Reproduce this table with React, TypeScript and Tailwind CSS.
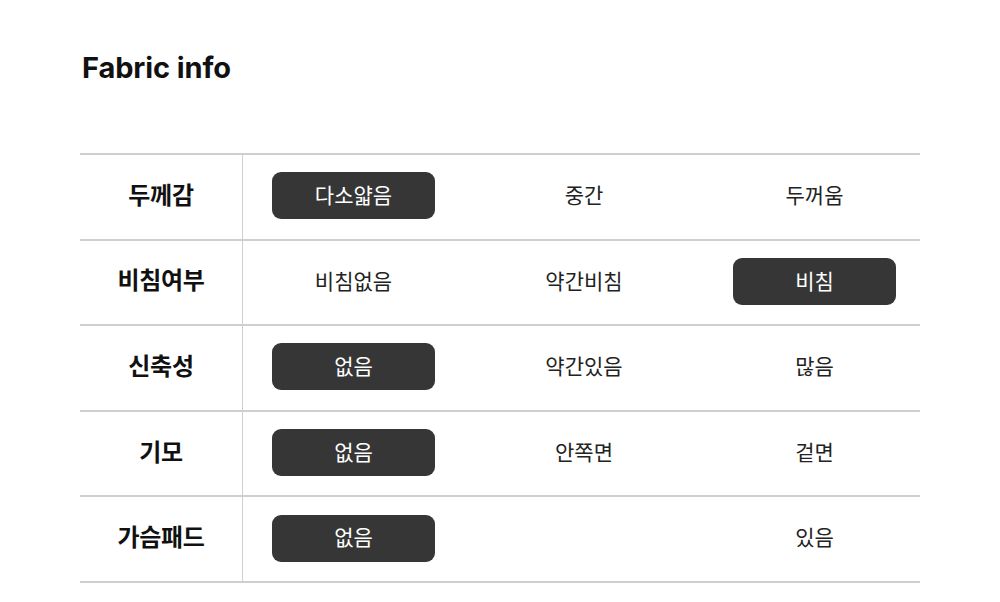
const rows: { label: string; options: string[]; selected: number }[] = [
  { label: "두께감", options: ["다소얇음", "중간", "두꺼움"], selected: 0 },
  { label: "비침여부", options: ["비침없음", "약간비침", "비침"], selected: 2 },
  { label: "신축성", options: ["없음", "약간있음", "많음"], selected: 0 },
  { label: "기모", options: ["없음", "안쪽면", "겉면"], selected: 0 },
  { label: "가슴패드", options: ["없음", "", "있음"], selected: 0 },
];

const font = { fontFamily: "Inter, 'Noto Sans CJK KR', sans-serif" };

export default function App() {
  return (
    <div className="h-[602px] w-[1000px] bg-white px-[80px] pt-[50px]" style={font}>
      <h1 className="pl-[2px] text-[29px] font-bold leading-[35px] tracking-[-0.1px] text-[#111]">
        Fabric info
      </h1>
      <div className="mt-[68px] border-t-2 border-[#cfcfcf]">
        {rows.map((row) => (
          <div key={row.label} className="flex h-[85.6px] border-b-2 border-[#cfcfcf]">
            <div className="flex w-[163px] shrink-0 items-center justify-center border-r border-[#cfcfcf] pb-[2px] text-[24px] font-bold tracking-[-0.3px] text-[#111]">
              {row.label}
            </div>
            <div className="flex flex-1 items-center justify-between pb-[2px] pl-[29px] pr-[24px]">
              {row.options.map((opt, i) => (
                <div
                  key={i}
                  className={`flex h-[47px] w-[163px] items-center justify-center rounded-[9px] text-[21px] ${
                    i === row.selected ? "bg-[#363636] text-white" : "text-[#222]"
                  }`}
                >
                  {opt}
                </div>
              ))}
            </div>
          </div>
        ))}
      </div>
    </div>
  );
}
